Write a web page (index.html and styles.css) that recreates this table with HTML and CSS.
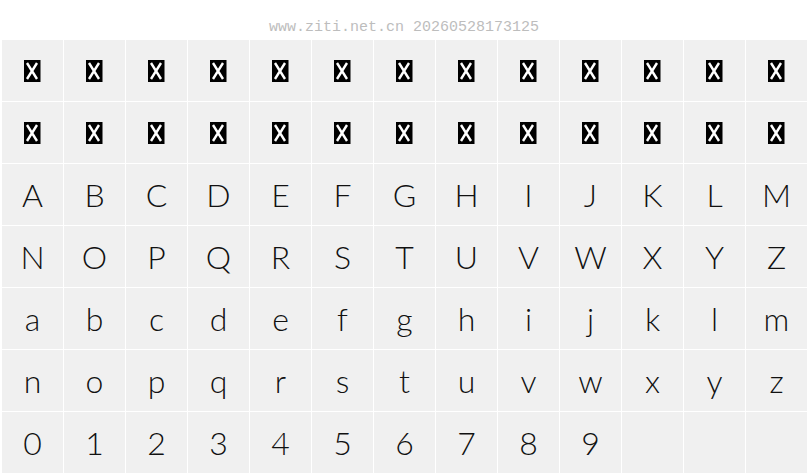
FILE: index.html
```html
<!DOCTYPE html>
<html>
<head>
<meta charset="utf-8">
<link rel="stylesheet" href="styles.css">
</head>
<body>
<div class="page">
  <div class="stamp">www.ziti.net.cn 20260528173125</div>
  <div class="grid">
    <div class="cell"><svg class="tofu" viewBox="0 0 17 22"><rect width="16" height="22" fill="#000"/><rect x="16" width="1" height="22" fill="#777"/><path d="M3 3 L13 19 M13 3 L3 19" stroke="#fff" stroke-width="2.4"/></svg></div>
    <div class="cell"><svg class="tofu" viewBox="0 0 17 22"><rect width="16" height="22" fill="#000"/><rect x="16" width="1" height="22" fill="#777"/><path d="M3 3 L13 19 M13 3 L3 19" stroke="#fff" stroke-width="2.4"/></svg></div>
    <div class="cell"><svg class="tofu" viewBox="0 0 17 22"><rect width="16" height="22" fill="#000"/><rect x="16" width="1" height="22" fill="#777"/><path d="M3 3 L13 19 M13 3 L3 19" stroke="#fff" stroke-width="2.4"/></svg></div>
    <div class="cell"><svg class="tofu" viewBox="0 0 17 22"><rect width="16" height="22" fill="#000"/><rect x="16" width="1" height="22" fill="#777"/><path d="M3 3 L13 19 M13 3 L3 19" stroke="#fff" stroke-width="2.4"/></svg></div>
    <div class="cell"><svg class="tofu" viewBox="0 0 17 22"><rect width="16" height="22" fill="#000"/><rect x="16" width="1" height="22" fill="#777"/><path d="M3 3 L13 19 M13 3 L3 19" stroke="#fff" stroke-width="2.4"/></svg></div>
    <div class="cell"><svg class="tofu" viewBox="0 0 17 22"><rect width="16" height="22" fill="#000"/><rect x="16" width="1" height="22" fill="#777"/><path d="M3 3 L13 19 M13 3 L3 19" stroke="#fff" stroke-width="2.4"/></svg></div>
    <div class="cell"><svg class="tofu" viewBox="0 0 17 22"><rect width="16" height="22" fill="#000"/><rect x="16" width="1" height="22" fill="#777"/><path d="M3 3 L13 19 M13 3 L3 19" stroke="#fff" stroke-width="2.4"/></svg></div>
    <div class="cell"><svg class="tofu" viewBox="0 0 17 22"><rect width="16" height="22" fill="#000"/><rect x="16" width="1" height="22" fill="#777"/><path d="M3 3 L13 19 M13 3 L3 19" stroke="#fff" stroke-width="2.4"/></svg></div>
    <div class="cell"><svg class="tofu" viewBox="0 0 17 22"><rect width="16" height="22" fill="#000"/><rect x="16" width="1" height="22" fill="#777"/><path d="M3 3 L13 19 M13 3 L3 19" stroke="#fff" stroke-width="2.4"/></svg></div>
    <div class="cell"><svg class="tofu" viewBox="0 0 17 22"><rect width="16" height="22" fill="#000"/><rect x="16" width="1" height="22" fill="#777"/><path d="M3 3 L13 19 M13 3 L3 19" stroke="#fff" stroke-width="2.4"/></svg></div>
    <div class="cell"><svg class="tofu" viewBox="0 0 17 22"><rect width="16" height="22" fill="#000"/><rect x="16" width="1" height="22" fill="#777"/><path d="M3 3 L13 19 M13 3 L3 19" stroke="#fff" stroke-width="2.4"/></svg></div>
    <div class="cell"><svg class="tofu" viewBox="0 0 17 22"><rect width="16" height="22" fill="#000"/><rect x="16" width="1" height="22" fill="#777"/><path d="M3 3 L13 19 M13 3 L3 19" stroke="#fff" stroke-width="2.4"/></svg></div>
    <div class="cell"><svg class="tofu" viewBox="0 0 17 22"><rect width="16" height="22" fill="#000"/><rect x="16" width="1" height="22" fill="#777"/><path d="M3 3 L13 19 M13 3 L3 19" stroke="#fff" stroke-width="2.4"/></svg></div>
    <div class="cell"><svg class="tofu" viewBox="0 0 17 22"><rect width="16" height="22" fill="#000"/><rect x="16" width="1" height="22" fill="#777"/><path d="M3 3 L13 19 M13 3 L3 19" stroke="#fff" stroke-width="2.4"/></svg></div>
    <div class="cell"><svg class="tofu" viewBox="0 0 17 22"><rect width="16" height="22" fill="#000"/><rect x="16" width="1" height="22" fill="#777"/><path d="M3 3 L13 19 M13 3 L3 19" stroke="#fff" stroke-width="2.4"/></svg></div>
    <div class="cell"><svg class="tofu" viewBox="0 0 17 22"><rect width="16" height="22" fill="#000"/><rect x="16" width="1" height="22" fill="#777"/><path d="M3 3 L13 19 M13 3 L3 19" stroke="#fff" stroke-width="2.4"/></svg></div>
    <div class="cell"><svg class="tofu" viewBox="0 0 17 22"><rect width="16" height="22" fill="#000"/><rect x="16" width="1" height="22" fill="#777"/><path d="M3 3 L13 19 M13 3 L3 19" stroke="#fff" stroke-width="2.4"/></svg></div>
    <div class="cell"><svg class="tofu" viewBox="0 0 17 22"><rect width="16" height="22" fill="#000"/><rect x="16" width="1" height="22" fill="#777"/><path d="M3 3 L13 19 M13 3 L3 19" stroke="#fff" stroke-width="2.4"/></svg></div>
    <div class="cell"><svg class="tofu" viewBox="0 0 17 22"><rect width="16" height="22" fill="#000"/><rect x="16" width="1" height="22" fill="#777"/><path d="M3 3 L13 19 M13 3 L3 19" stroke="#fff" stroke-width="2.4"/></svg></div>
    <div class="cell"><svg class="tofu" viewBox="0 0 17 22"><rect width="16" height="22" fill="#000"/><rect x="16" width="1" height="22" fill="#777"/><path d="M3 3 L13 19 M13 3 L3 19" stroke="#fff" stroke-width="2.4"/></svg></div>
    <div class="cell"><svg class="tofu" viewBox="0 0 17 22"><rect width="16" height="22" fill="#000"/><rect x="16" width="1" height="22" fill="#777"/><path d="M3 3 L13 19 M13 3 L3 19" stroke="#fff" stroke-width="2.4"/></svg></div>
    <div class="cell"><svg class="tofu" viewBox="0 0 17 22"><rect width="16" height="22" fill="#000"/><rect x="16" width="1" height="22" fill="#777"/><path d="M3 3 L13 19 M13 3 L3 19" stroke="#fff" stroke-width="2.4"/></svg></div>
    <div class="cell"><svg class="tofu" viewBox="0 0 17 22"><rect width="16" height="22" fill="#000"/><rect x="16" width="1" height="22" fill="#777"/><path d="M3 3 L13 19 M13 3 L3 19" stroke="#fff" stroke-width="2.4"/></svg></div>
    <div class="cell"><svg class="tofu" viewBox="0 0 17 22"><rect width="16" height="22" fill="#000"/><rect x="16" width="1" height="22" fill="#777"/><path d="M3 3 L13 19 M13 3 L3 19" stroke="#fff" stroke-width="2.4"/></svg></div>
    <div class="cell"><svg class="tofu" viewBox="0 0 17 22"><rect width="16" height="22" fill="#000"/><rect x="16" width="1" height="22" fill="#777"/><path d="M3 3 L13 19 M13 3 L3 19" stroke="#fff" stroke-width="2.4"/></svg></div>
    <div class="cell"><svg class="tofu" viewBox="0 0 17 22"><rect width="16" height="22" fill="#000"/><rect x="16" width="1" height="22" fill="#777"/><path d="M3 3 L13 19 M13 3 L3 19" stroke="#fff" stroke-width="2.4"/></svg></div>
    <div class="cell">A</div><div class="cell">B</div><div class="cell">C</div><div class="cell">D</div><div class="cell">E</div><div class="cell">F</div><div class="cell">G</div><div class="cell">H</div><div class="cell">I</div><div class="cell">J</div><div class="cell">K</div><div class="cell">L</div><div class="cell">M</div>
    <div class="cell">N</div><div class="cell">O</div><div class="cell">P</div><div class="cell">Q</div><div class="cell">R</div><div class="cell">S</div><div class="cell">T</div><div class="cell">U</div><div class="cell">V</div><div class="cell">W</div><div class="cell">X</div><div class="cell">Y</div><div class="cell">Z</div>
    <div class="cell">a</div><div class="cell">b</div><div class="cell">c</div><div class="cell">d</div><div class="cell">e</div><div class="cell">f</div><div class="cell">g</div><div class="cell">h</div><div class="cell">i</div><div class="cell">j</div><div class="cell">k</div><div class="cell">l</div><div class="cell">m</div>
    <div class="cell">n</div><div class="cell">o</div><div class="cell">p</div><div class="cell">q</div><div class="cell">r</div><div class="cell">s</div><div class="cell">t</div><div class="cell">u</div><div class="cell">v</div><div class="cell">w</div><div class="cell">x</div><div class="cell">y</div><div class="cell">z</div>
    <div class="cell">0</div><div class="cell">1</div><div class="cell">2</div><div class="cell">3</div><div class="cell">4</div><div class="cell">5</div><div class="cell">6</div><div class="cell">7</div><div class="cell">8</div><div class="cell">9</div><div class="cell"></div><div class="cell"></div><div class="cell"></div>
  </div>
</div>
</body>
</html>
```

FILE: styles.css
```css
html, body {
  margin: 0;
  padding: 0;
  background: #ffffff;
}

.page {
  width: 808px;
  height: 476px;
  overflow: hidden;
}

.stamp {
  padding-top: 18px;
  height: 22px;
  line-height: 20px;
  text-align: center;
  font-family: "Liberation Mono", "DejaVu Sans Mono", monospace;
  font-size: 15px;
  color: #bdbdbd;
  box-sizing: content-box;
}

.grid {
  display: grid;
  grid-template-columns: repeat(13, 61px);
  grid-auto-rows: 61px;
  gap: 1px;
  padding-left: 2px;
}

.cell {
  background: #f0f0f0;
  display: flex;
  align-items: center;
  justify-content: center;
  font-family: "Lato", "DejaVu Sans", sans-serif;
  font-weight: 300;
  font-size: 32px;
  line-height: 61px;
  color: #111111;
}

.tofu {
  width: 17px;
  height: 22px;
  display: block;
}
```
